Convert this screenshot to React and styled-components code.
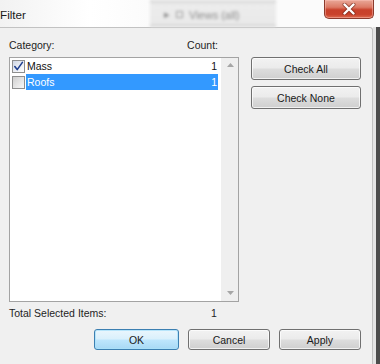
import React from "react";
import styled, { createGlobalStyle } from "styled-components";

const Global = createGlobalStyle`
  html, body { margin: 0; padding: 0; background: #ffffff; }
  body { font-family: "Liberation Sans", Arial, sans-serif; font-size: 10.5px; color: #1e1e1e; }
  * { box-sizing: border-box; }
`;

const Window = styled.div`
  width: 380px;
  height: 364px;
  display: flex;
  flex-direction: column;
  overflow: hidden;
  background: #ffffff;
`;

const TitleBar = styled.div`
  height: 27px;
  flex: none;
  display: flex;
  align-items: flex-start;
  background: linear-gradient(to right, #f2f2f2 0px, #ffffff 90px, #fbfbfb 150px);
`;

const Title = styled.div`
  width: 150px;
  padding: 8px 0 0 0;
  font-size: 11.7px;
  line-height: 13px;
  color: #1a1a1a;
`;

const Behind = styled.div`
  width: 126px;
  height: 27px;
  background: linear-gradient(to bottom, #d6d6d6 0px, #ececec 5px, #e9e9e9 24px, #c8c8c8 26px, #f2f2f2 27px);
  filter: blur(1.4px);
  display: flex;
  align-items: center;
  padding: 2px 0 0 14px;
  gap: 6px;
  color: #8c8c8c;
  font-size: 11px;
`;

const BehindIcon = styled.span`
  width: 7px;
  height: 7px;
  border: 1px solid #9a9a9a;
`;

const Spacer = styled.div`
  flex: 1;
`;

const CloseButton = styled.div`
  width: 50px;
  height: 19px;
  margin-right: 6px;
  border: 1px solid #8b3a2c;
  border-top: none;
  border-radius: 0 0 5px 5px;
  background: linear-gradient(to bottom, #e9a898 0%, #dc7a66 40%, #c8402a 55%, #c9422b 80%, #dc6a4e 100%);
  display: flex;
  align-items: center;
  justify-content: center;
  box-shadow: inset 0 0 0 1px rgba(255, 200, 190, 0.45);
`;

const Body = styled.div`
  flex: 1;
  display: flex;
`;

const Client = styled.div`
  width: 373px;
  background: #f0f0f0;
  border-top: 1px solid #c2c2c2;
  border-right: 1px solid #c2c2c2;
  border-top-right-radius: 3px;
  display: grid;
  grid-template-columns: 230px 110px;
  grid-template-rows: 29px 245px 18px auto;
  column-gap: 12px;
  padding: 0 0 0 9px;
  align-content: start;
`;

const Frame = styled.div`
  flex: 1;
  background: linear-gradient(to right, #e4e4e4 0px, #e4e4e4 3px, #4c4c4c 3px, #4c4c4c 100%);
`;

const Header = styled.div`
  grid-column: 1;
  display: flex;
  justify-content: space-between;
  align-items: flex-end;
  padding: 0 21px 5px 0;
  line-height: 13px;
`;

const ListBox = styled.div`
  grid-column: 1;
  border: 1px solid #a3a3a3;
  background: #ffffff;
  display: flex;
`;

const Rows = styled.div`
  flex: 1;
  display: flex;
  flex-direction: column;
  padding-top: 0;
`;

const Row = styled.div`
  height: 16px;
  display: flex;
  align-items: center;
  padding: 0 3px 0 2px;
`;

const Box = styled.span`
  width: 13px;
  height: 13px;
  flex: none;
  border: 1px solid #8e8f8f;
  background: ${(p) =>
    p.checked
      ? "linear-gradient(135deg, #cfd6e4 0%, #eef1f6 60%, #ffffff 100%)"
      : "linear-gradient(135deg, #cfcfcf 0%, #e6e6e6 55%, #f8f8f8 100%)"};
  display: flex;
  align-items: center;
  justify-content: center;
  margin-right: 1px;
`;

const RowBody = styled.span`
  flex: 1;
  height: 16px;
  display: flex;
  align-items: center;
  justify-content: space-between;
  padding: 0 0 0 1px;
  line-height: 16px;
  background: ${(p) => (p.selected ? "#3399ff" : "transparent")};
  color: ${(p) => (p.selected ? "#ffffff" : "#111111")};
`;

const Count = styled.span`
  padding-right: 1px;
`;

const ScrollBar = styled.div`
  width: 17px;
  flex: none;
  background: #efefef;
  display: flex;
  flex-direction: column;
  justify-content: space-between;
  align-items: center;
  padding: 5px 0 6px 1px;
`;

const SideButtons = styled.div`
  grid-column: 2;
  grid-row: 2;
  display: flex;
  flex-direction: column;
  gap: 6px;
`;

const Button = styled.div`
  width: ${(p) => p.w || 110}px;
  height: ${(p) => p.h || 23}px;
  border: 1px solid ${(p) => (p.primary ? "#3c7fb1" : "#707070")};
  border-radius: 3px;
  background: ${(p) =>
    p.primary
      ? "linear-gradient(to bottom, #eaf6fd 0%, #d9f0fc 48%, #bee6fd 52%, #a7d9f5 100%)"
      : "linear-gradient(to bottom, #f2f2f2 0%, #ebebeb 48%, #dddddd 52%, #cfcfcf 100%)"};
  box-shadow: inset 0 0 0 1px ${(p) => (p.primary ? "rgba(170,225,250,0.8)" : "rgba(255,255,255,0.7)")};
  display: flex;
  align-items: center;
  justify-content: center;
  font-size: 10.5px;
  color: #1a1a1a;
`;

const Total = styled.div`
  grid-column: 1;
  display: flex;
  align-items: flex-end;
  line-height: 13px;
  padding-top: 4px;
`;

const TotalLabel = styled.span`
  width: 202px;
`;

const BottomBar = styled.div`
  grid-column: 1 / span 2;
  display: flex;
  justify-content: flex-end;
  gap: 9px;
  padding-top: 9px;
`;

const Check = () => (
  <svg width="11" height="11" viewBox="0 0 11 11">
    <path d="M1.8 5.6 L4.2 8.6 L9.4 1.4" fill="none" stroke="#1f3f8f" strokeWidth="1.6" strokeLinejoin="round" strokeLinecap="round" />
  </svg>
);

const Arrow = ({ down }) => (
  <svg width="7" height="4" viewBox="0 0 7 4">
    <path d={down ? "M0 0 H7 L3.5 4 Z" : "M0 4 H7 L3.5 0 Z"} fill="#a6a6a6" />
  </svg>
);

const XIcon = () => (
  <svg width="14" height="12" viewBox="0 0 14 12">
    <path d="M2.5 1.5 L11.5 10.5 M11.5 1.5 L2.5 10.5" stroke="#6a2214" strokeWidth="4" strokeLinecap="round" opacity="0.6" />
    <path d="M2.5 1.5 L11.5 10.5 M11.5 1.5 L2.5 10.5" stroke="#ffffff" strokeWidth="2.4" strokeLinecap="round" />
  </svg>
);

const items = [
  { name: "Mass", count: 1, checked: true, selected: false },
  { name: "Roofs", count: 1, checked: false, selected: true },
];

export default function App() {
  return (
    <>
      <Global />
      <Window>
        <TitleBar>
          <Title>Filter</Title>
          <Behind>
            <span>▸</span>
            <BehindIcon />
            <span>Views (all)</span>
          </Behind>
          <Spacer />
          <CloseButton>
            <XIcon />
          </CloseButton>
        </TitleBar>
        <Body>
          <Client>
            <Header>
              <span>Category:</span>
              <span>Count:</span>
            </Header>
            <ListBox>
              <Rows>
                {items.map((it) => (
                  <Row key={it.name}>
                    <Box checked={it.checked}>{it.checked && <Check />}</Box>
                    <RowBody selected={it.selected}>
                      <span>{it.name}</span>
                      <Count>{it.count}</Count>
                    </RowBody>
                  </Row>
                ))}
              </Rows>
              <ScrollBar>
                <Arrow />
                <Arrow down />
              </ScrollBar>
            </ListBox>
            <SideButtons>
              <Button>Check All</Button>
              <Button>Check None</Button>
            </SideButtons>
            <Total>
              <TotalLabel>Total Selected Items:</TotalLabel>
              <span>1</span>
            </Total>
            <BottomBar>
              <Button primary w={85} h={21}>OK</Button>
              <Button w={82} h={21}>Cancel</Button>
              <Button w={82} h={21}>Apply</Button>
            </BottomBar>
          </Client>
          <Frame />
        </Body>
      </Window>
    </>
  );
}
